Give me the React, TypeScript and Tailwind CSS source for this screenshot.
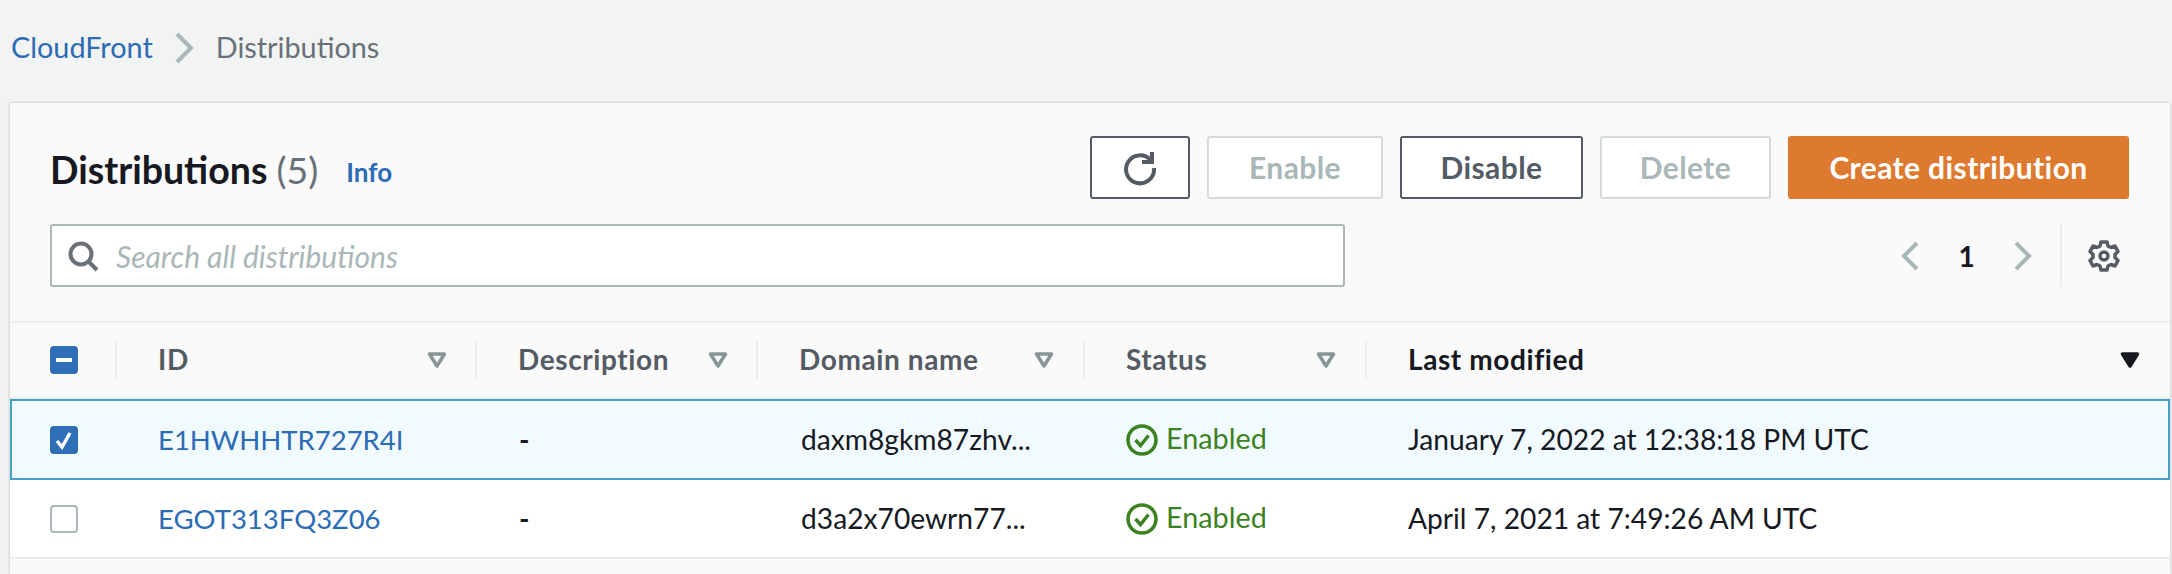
const font = { fontFamily: '"Lato", "Liberation Sans", sans-serif' };

const columns = "grid grid-cols-[107px_360px_281px_327px_282px_1fr]";

function FilterArrow({ solid }: { solid?: boolean }) {
  return (
    <svg width="20" height="16" viewBox="0 0 20 16" className="shrink-0">
      <path
        d="M2.500 2h15L10 14z"
        fill={solid ? "#16191f" : "none"}
        stroke={solid ? "#16191f" : "#879596"}
        strokeWidth="3.500"
        strokeLinejoin="round"
      />
    </svg>
  );
}

function HeaderCell({ label, pad }: { label: string; pad: string }) {
  return (
    <div className={`flex items-center justify-between border-r-2 border-[#eaeded] h-[38px] pl-[41px] ${pad}`}>
      <span className="-mt-[2px] text-[28px] font-bold tracking-[0.6px] text-[#545b64]">{label}</span>
      <FilterArrow />
    </div>
  );
}

function Checkbox({ state }: { state: "on" | "off" | "some" }) {
  if (state === "off") {
    return <div className="w-[28px] h-[28px] rounded-[4px] border-2 border-[#aab7b8] bg-white" />;
  }
  return (
    <div className="w-[28px] h-[28px] rounded-[4px] bg-[#2f6fb7] flex items-center justify-center">
      <svg width="20" height="20" viewBox="0 0 20 20">
        {state === "on" ? (
          <path d="M3 11l5 6 8-14" fill="none" stroke="white" strokeWidth="3.500" />
        ) : (
          <path d="M2 10h16" fill="none" stroke="white" strokeWidth="4" />
        )}
      </svg>
    </div>
  );
}

function StatusEnabled() {
  return (
    <div className="flex items-center gap-[8px] pl-[41px] text-[28.800px] text-[#3b8220]">
      <svg width="32" height="32" viewBox="0 0 32 32" className="shrink-0">
        <circle cx="16" cy="16" r="14" fill="none" stroke="#3b8220" strokeWidth="3.500" />
        <path d="M9.500 16l5 5.500 8-10" fill="none" stroke="#3b8220" strokeWidth="3.500" />
      </svg>
      <span className="-mt-[2px]">Enabled</span>
    </div>
  );
}

function Row({ id, domain, modified, selected }: { id: string; domain: string; modified: string; selected?: boolean }) {
  return (
    <div
      className={`${columns} items-center text-[28.200px] text-[#16191f] ${
        selected
          ? "h-[81px] outline-2 -outline-offset-2 outline-[#44a0c6] bg-[#f1faff]"
          : "h-[79px] border-b-2 border-[#eaeded] bg-white"
      }`}
    >
      <div className="pl-[40px]">
        <Checkbox state={selected ? "on" : "off"} />
      </div>
      <a className="pl-[41px] text-[27.500px] text-[#2b6cb5]">{id}</a>
      <div className="pl-[42px] font-bold">-</div>
      <div className="pl-[43px]">{domain}</div>
      <StatusEnabled />
      <div className="pl-[41px]">{modified}</div>
    </div>
  );
}

function Gear() {
  return (
    <svg width="32" height="32" viewBox="1 1 32 32" fill="none" stroke="#545b64">
      <circle cx="17" cy="17" r="4" strokeWidth="3.500" />
      <path
        d="M14 3h6l1 4 3 1.500 4-1.500 3 5.500-3 3v3l3 3-3 5.500-4-1.500-3 1.500-1 4h-6l-1-4-3-1.500-4 1.500-3-5.500 3-3v-3l-3-3 3-5.500 4 1.500 3-1.500z"
        strokeWidth="3.500"
        strokeLinejoin="round"
      />
    </svg>
  );
}

export default function App() {
  return (
    <div className="h-[574px] overflow-hidden bg-[#f2f3f3]" style={font}>
      {/* Breadcrumbs */}
      <nav className="h-[95px] flex items-center pl-[11px] text-[28.800px]">
        <a className="text-[#2b6cb5]">CloudFront</a>
        <svg width="20" height="32" viewBox="0 0 20 32" className="ml-[21px] mr-[22px]">
          <path d="M3 2l14 14L3 30" fill="none" stroke="#aab7b8" strokeWidth="4" />
        </svg>
        <span className="text-[#687078]">Distributions</span>
      </nav>

      <div className="mt-[8px] ml-[10px] mr-[2px] h-[471px] bg-[#fafafa] shadow-[0_0_3px_rgba(0,0,0,0.25)]">
        {/* Title and actions */}
        <div className="flex justify-between pl-[40px] pr-[41px] pt-[33px]">
          <div className="flex items-center h-[63px]">
            <h1 className="mt-[6px] text-[37.500px] font-bold text-[#16191f]">
              Distributions <span className="font-normal text-[#687078]">(5)</span>
            </h1>
            <a className="ml-[28px] mt-[10px] text-[26px] font-bold text-[#2b6cb5]">Info</a>
          </div>
          <div className="flex gap-[17px] text-[30px] font-bold tracking-[0.4px]">
            <button className="w-[100px] h-[63px] flex items-center justify-center rounded-[3px] border-2 border-[#545b64] bg-white">
              <svg width="36" height="36" viewBox="0 0 36 36" fill="none" stroke="#545b64" strokeWidth="4">
                <path d="M28.500 10A14 14 0 1 0 32 18" />
                <path d="M30 2v10H20" />
              </svg>
            </button>
            <button className="w-[176px] h-[63px] rounded-[3px] border-2 border-[#d5dbdb] bg-white text-[#aab7b8]">Enable</button>
            <button className="w-[183px] h-[63px] rounded-[3px] border-2 border-[#545b64] bg-white text-[#545b64]">Disable</button>
            <button className="w-[171px] h-[63px] rounded-[3px] border-2 border-[#d5dbdb] bg-white text-[#aab7b8]">Delete</button>
            <button className="w-[341px] h-[63px] rounded-[3px] bg-[#dd7a30] text-white">Create distribution</button>
          </div>
        </div>

        {/* Search and pagination */}
        <div className="flex justify-between pl-[40px] pr-[41px] mt-[25px]">
          <div className="w-[1295px] h-[63px] flex items-center gap-[17px] rounded-[3px] border-2 border-[#aab7b8] bg-white pl-[15px]">
            <svg width="32" height="32" viewBox="0 0 32 32" fill="none" stroke="#687078" strokeWidth="4">
              <circle cx="14" cy="14" r="10.500" />
              <path d="M21 21l9 9" />
            </svg>
            <span className="mt-[2px] text-[30px] italic text-[#aab7b8]">Search all distributions</span>
          </div>
          <div className="flex items-center h-[63px] pr-[9px]">
            <svg width="20" height="32" viewBox="0 0 20 32">
              <path d="M17 3L4 16l13 13" fill="none" stroke="#aab7b8" strokeWidth="4" />
            </svg>
            <span className="w-[93px] text-center text-[28px] font-bold text-[#16191f]">1</span>
            <svg width="20" height="32" viewBox="0 0 20 32">
              <path d="M3 3l13 13L3 29" fill="none" stroke="#aab7b8" strokeWidth="4" />
            </svg>
            <div className="ml-[27px] mr-[26px] h-[63px] border-l-2 border-[#eaeded]" />
            <Gear />
          </div>
        </div>

        {/* Table */}
        <div className="mt-[34px] border-t-2 border-[#eaeded]">
          <div className={`${columns} items-center h-[76px] border-b-2 border-[#eaeded]`}>
            <div className="flex items-center justify-between h-[38px] pl-[40px] border-r-2 border-[#eaeded]">
              <Checkbox state="some" />
            </div>
            <HeaderCell label="ID" pad="pr-[28px]" />
            <HeaderCell label="Description" pad="pr-[28px]" />
            <HeaderCell label="Domain name" pad="pr-[29px]" />
            <HeaderCell label="Status" pad="pr-[29px]" />
            <div className="flex items-center justify-between pl-[41px] pr-[30px]">
              <span className="-mt-[2px] text-[28px] font-bold tracking-[0.6px] text-[#16191f]">Last modified</span>
              <FilterArrow solid />
            </div>
          </div>
          <Row id="E1HWHHTR727R4I" domain="daxm8gkm87zhv..." modified="January 7, 2022 at 12:38:18 PM UTC" selected />
          <Row id="EGOT313FQ3Z06" domain="d3a2x70ewrn77..." modified="April 7, 2021 at 7:49:26 AM UTC" />
        </div>
      </div>
    </div>
  );
}
